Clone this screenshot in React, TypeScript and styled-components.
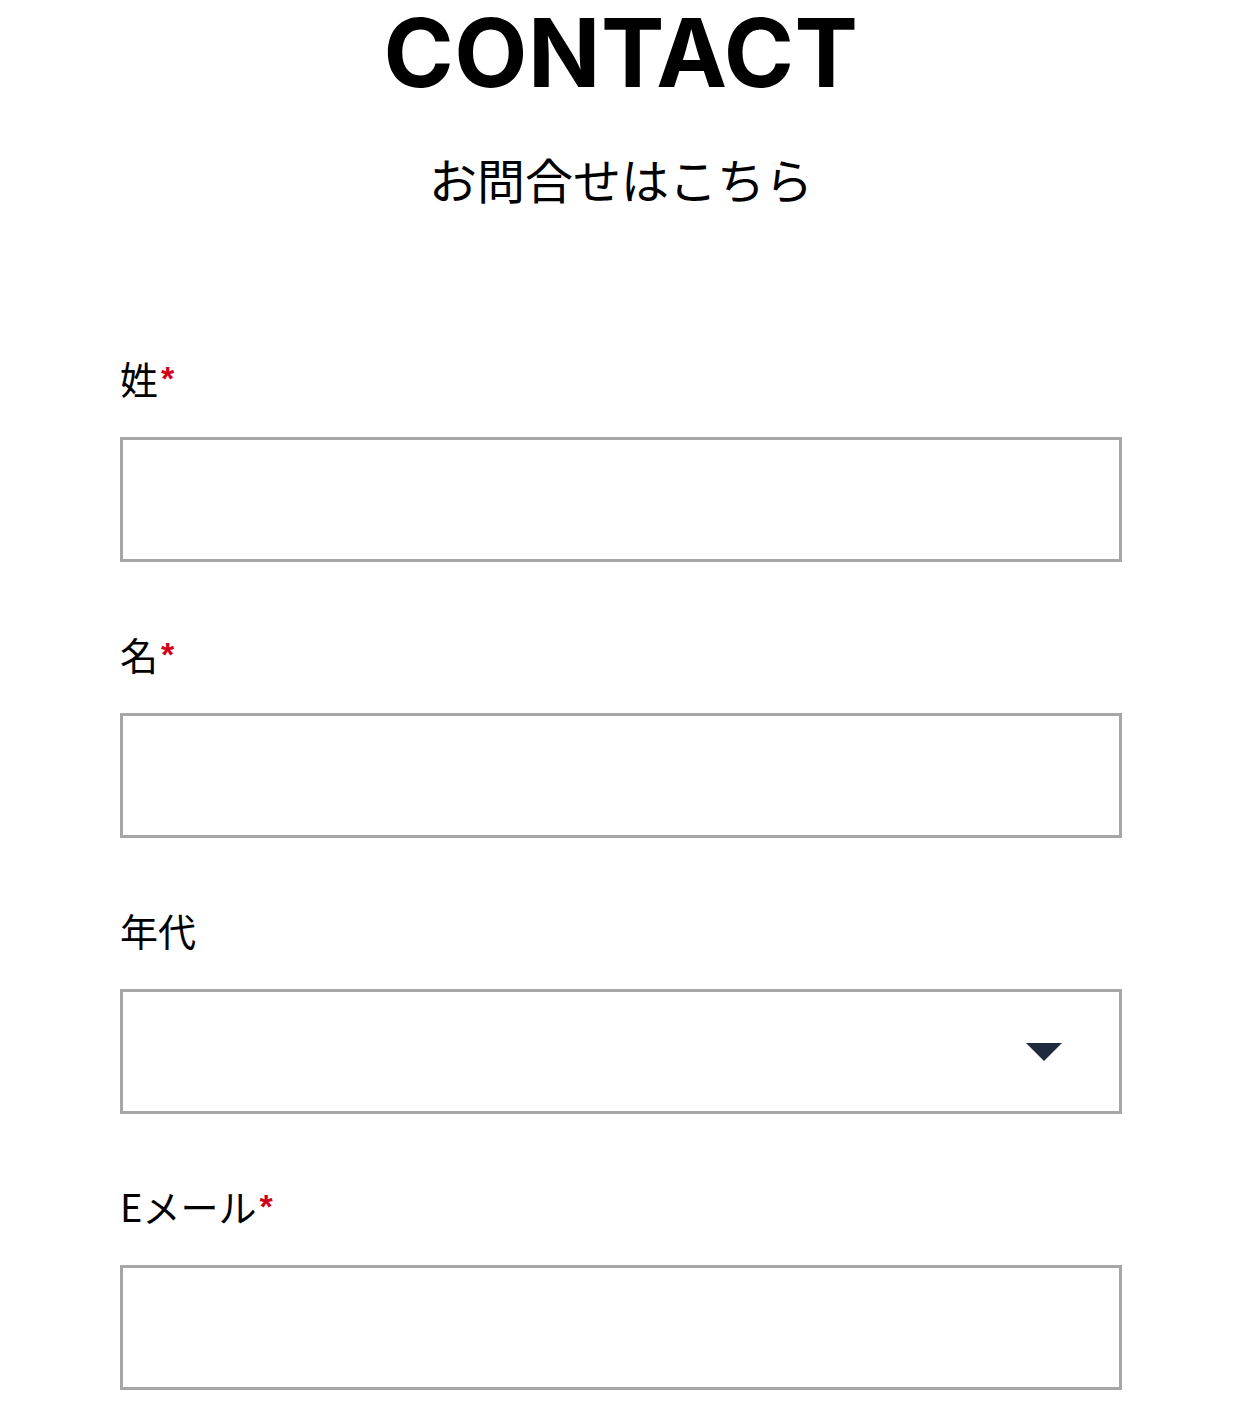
import React from "react";
import styled, { createGlobalStyle } from "styled-components";

const GlobalStyle = createGlobalStyle`
  html, body {
    margin: 0;
    padding: 0;
    background: #ffffff;
  }
  body {
    font-family: "Noto Sans CJK JP", "Noto Sans", sans-serif;
    color: #000;
  }
  * { box-sizing: border-box; }
`;

const Page = styled.main`
  width: 1242px;
  display: flex;
  flex-direction: column;
  align-items: center;
  padding-top: 0;
`;

const Title = styled.h1`
  margin: 0;
  font-family: Inter, "Noto Sans", sans-serif;
  font-weight: 700;
  font-size: 95px;
  line-height: 105px;
  letter-spacing: 0.5px;
  color: #000;
`;

const Subtitle = styled.p`
  margin: 38px 0 0;
  font-family: "Noto Sans CJK JP", sans-serif;
  font-size: 48px;
  line-height: 70px;
  font-weight: 400;
`;

const Form = styled.form`
  width: 1002px;
  margin-top: 136px;
  display: flex;
  flex-direction: column;
  gap: 63px;
`;

const Field = styled.div`
  display: flex;
  flex-direction: column;
  gap: 31px;
`;

const Label = styled.label`
  font-family: "Noto Sans CJK JP", sans-serif;
  font-size: 38px;
  line-height: 57px;
  height: 57px;
  display: flex;
  align-items: flex-start;
`;

const Required = styled.span`
  color: #d0021b;
  font-family: "Liberation Sans", sans-serif;
  font-weight: 700;
  font-size: 34px;
  line-height: 34px;
  margin-left: 3px;
  margin-top: 12px;
`;

const TextInput = styled.input`
  display: block;
  width: 100%;
  height: 125px;
  border: 3px solid #a6a6a6;
  border-radius: 0;
  background: #fff;
  outline: none;
  padding: 0 24px;
  font-size: 36px;
  font-family: "Noto Sans CJK JP", sans-serif;
`;

const SelectBox = styled.div`
  width: 100%;
  height: 125px;
  border: 3px solid #a6a6a6;
  background: #fff;
  display: flex;
  align-items: center;
  justify-content: flex-end;
  padding-right: 57px;
`;

const Caret = () => (
  <svg width="36" height="18" viewBox="0 0 36 18" aria-hidden="true">
    <path d="M0 0 H36 L18 18 Z" fill="#1f2a3c" />
  </svg>
);

type FieldDef = { label: string; required?: boolean; kind: "text" | "select" };

const fields: FieldDef[] = [
  { label: "姓", required: true, kind: "text" },
  { label: "名", required: true, kind: "text" },
  { label: "年代", kind: "select" },
  { label: "Eメール", required: true, kind: "text" },
];

export default function App() {
  return (
    <>
      <GlobalStyle />
      <Page>
        <Title>CONTACT</Title>
        <Subtitle>お問合せはこちら</Subtitle>
        <Form onSubmit={(e) => e.preventDefault()}>
          {fields.map((f) => (
            <Field key={f.label}>
              <Label>
                {f.label}
                {f.required && <Required>*</Required>}
              </Label>
              {f.kind === "text" ? (
                <TextInput type="text" />
              ) : (
                <SelectBox role="combobox">
                  <Caret />
                </SelectBox>
              )}
            </Field>
          ))}
        </Form>
      </Page>
    </>
  );
}
